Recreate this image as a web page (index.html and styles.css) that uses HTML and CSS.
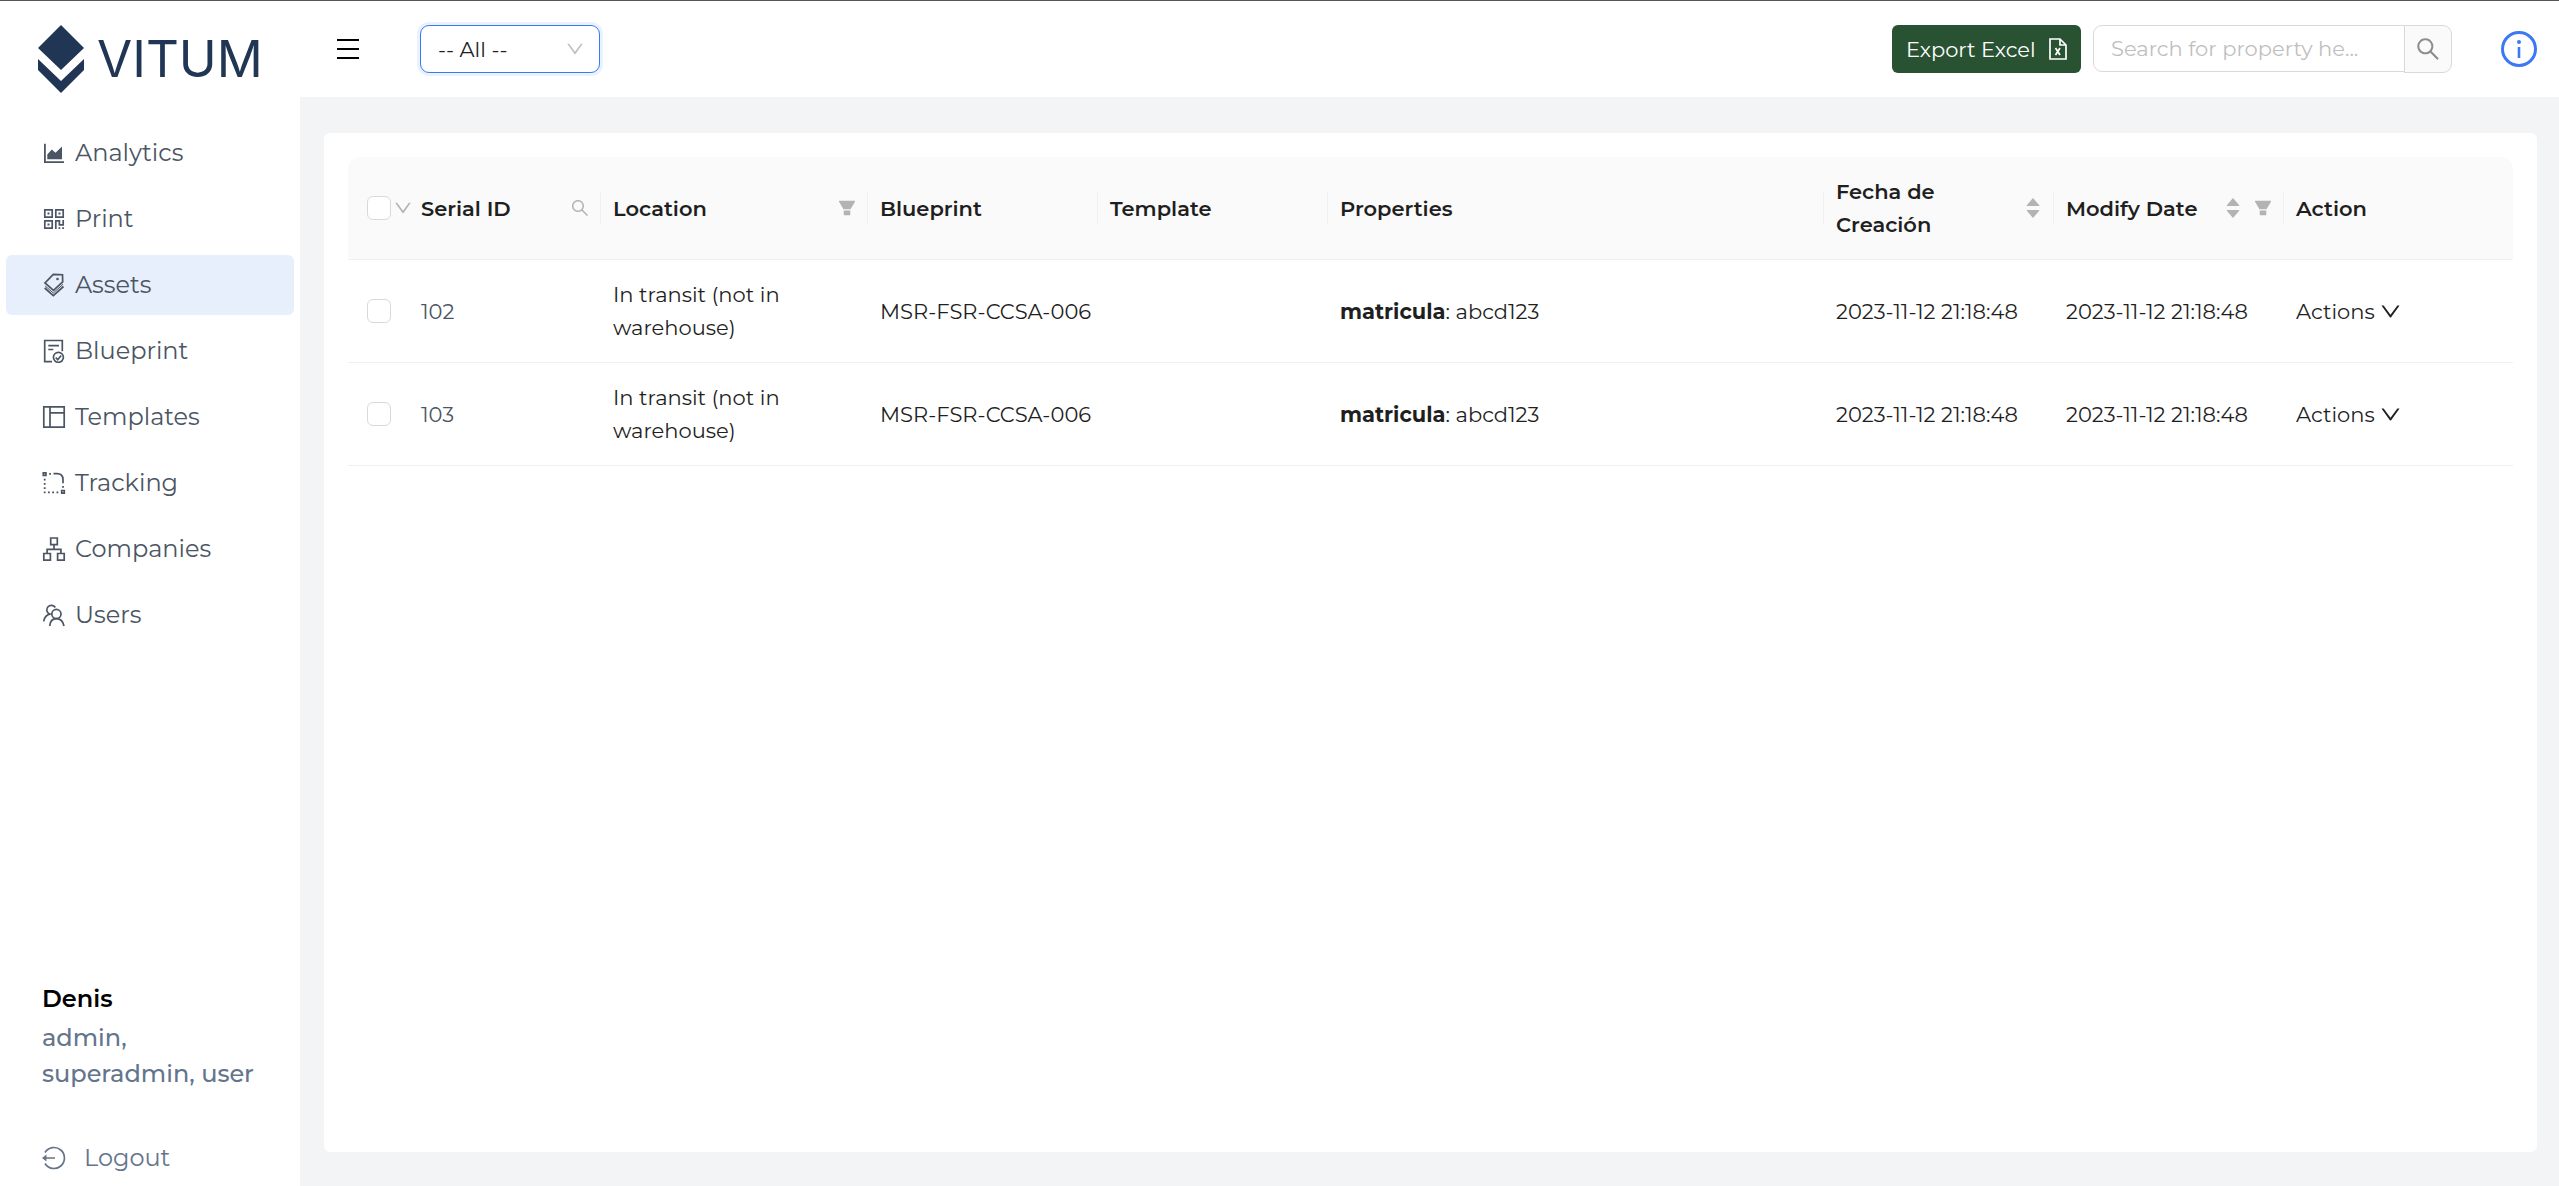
FILE: index.html
```html
<!DOCTYPE html>
<html lang="en">
<head>
<meta charset="utf-8">
<meta name="viewport" content="width=device-width, initial-scale=1">
<title>Vitum - Assets</title>
<link rel="stylesheet" href="styles.css">
</head>
<body>
<svg class="sprite" aria-hidden="true">
  <symbol id="i-down" viewBox="64 64 896 896"><path d="M884 256h-75c-5.1 0-9.9 2.5-12.9 6.6L512 654.2 227.9 262.6c-3-4.1-7.8-6.6-12.9-6.6h-75c-6.5 0-10.3 7.4-6.5 12.7l352.6 486.1c12.8 17.6 39 17.6 51.7 0l352.6-486.1c3.9-5.3.1-12.7-6.4-12.7z"/></symbol>
  <symbol id="i-search" viewBox="64 64 896 896"><path d="M909.6 854.5L649.9 594.8C690.2 542.7 712 479 712 412c0-80.2-31.3-155.4-87.9-212.1-56.6-56.7-132-87.9-212.1-87.9s-155.5 31.3-212.1 87.9C143.2 256.5 112 331.8 112 412c0 80.1 31.3 155.5 87.9 212.1C256.5 680.8 331.8 712 412 712c67 0 130.6-21.8 182.7-62l259.7 259.6a8.2 8.2 0 0011.6 0l43.6-43.5a8.2 8.2 0 000-11.6zM570.4 570.4C528 612.7 471.8 636 412 636s-116-23.3-158.4-65.6C211.3 528 188 471.8 188 412s23.3-116.1 65.6-158.4C296 211.3 352.2 188 412 188s116.1 23.2 158.4 65.6S636 352.2 636 412s-23.3 116.1-65.6 158.4z"/></symbol>
  <symbol id="i-filter" viewBox="64 64 896 896"><path d="M349 838c0 17.7 14.2 32 31.8 32h262.4c17.6 0 31.8-14.3 31.8-32V642H349v196zm531.1-684H143.9c-24.5 0-39.8 26.7-27.5 48l221.3 376h348.8l221.3-376c12.1-21.3-3.2-48-27.7-48z"/></symbol>
  <symbol id="i-sort" viewBox="0 0 14 20"><path d="M7 0l6 7q1 1-.5 1h-11Q0 8 1 7zM7 20l6-7q1-1-.5-1h-11Q0 12 1 13z"/></symbol>
</svg>
<div class="layout">
  <aside class="sidebar">
    <a class="logo" href="#">
      <svg width="46" height="68" viewBox="0 0 46 68" aria-hidden="true"><path d="M23 0l23 23-23 22L0 23zM0 34l23 22 23-22v11L23 68 0 45z"/></svg>
      <span>VITUM</span>
    </a>
    <nav class="menu">
      <a href="#"><svg viewBox="0 0 24 24"><path d="M2 2.700h1.800v17.500H22V22H2zM5.300 18.300v-4.800l4.500-5 3.700 3.300L20 5.500v12.800z"/></svg>Analytics</a>
      <a href="#"><svg viewBox="0 0 24 24"><path class="line" d="M2.800 2.800h7.400v7.400H2.800zM13.800 2.800h7.400v7.400h-7.400zM2.800 13.800h7.400v7.400H2.800zM13.800 22v-8.200h3.600v4h3.800V13"/><path d="M5.500 5.500h2v2h-2zM16.500 5.500h2v2h-2zM5.500 16.500h2v2h-2zM16.500 20.200h1.800V22h-1.800zM20.200 20.200H22V22h-1.800z"/></svg>Print</a>
      <a href="#" class="active" aria-current="page"><svg viewBox="0 0 24 24"><path class="line" d="M11.300 1.300l9.200.4.2 7.300-9.200 8.300L3 10zM2.700 15l8.600 7.700L21.500 13.500"/><path class="line thin" d="M3.200 13l8.100 7 9.700-8.700"/><circle cx="15.500" cy="6" r="1.300"/></svg>Assets</a>
      <a href="#"><svg viewBox="0 0 24 24"><path class="line" d="M10 22.700H2.700V1.500h17.600v10.700M6.300 6.600H17M6.300 10.500h5M13.700 18.500l2 2.200 3.500-4.200"/><circle class="line" cx="16.400" cy="18.300" r="5"/></svg>Blueprint</a>
      <a href="#"><svg viewBox="0 0 24 24"><path class="line" d="M1.800 1.800h20.400v20.400H1.800zM8 1.800v20.400M8 7.800h14.200"/></svg>Templates</a>
      <a href="#"><svg viewBox="0 0 24 24"><path class="line" d="M1.300 1.800h2.600v2.600H1.300zM19.700 19.500h2.600v2.600h-2.600zM11.500 2.700H15q6 0 6 6v3.500"/><path d="M7.200 2H9v1.800H7.200zM1.800 7.700h1.800v1.800H1.800zM1.800 12h1.800v1.800H1.800zM1.800 16.200h1.800V18H1.800zM1.800 20.500h1.800v1.800H1.800zM6 20.500h1.800v1.800H6zM10.200 20.500H12v1.800h-1.800zM14.500 20.500h1.800v1.800h-1.800zM20.100 15h1.800v1.800h-1.800z"/></svg>Tracking</a>
      <a href="#"><svg viewBox="0 0 24 24"><path class="line" d="M8.700 1h6.600v6.600H8.700zM1.800 16.500h6.600v6.600H1.800zM15.600 16.500h6.600v6.600h-6.600zM12 7.600v4.700M5.100 16.500v-4.200h13.800v4.200"/></svg>Companies</a>
      <a href="#"><svg viewBox="0 0 24 24"><path class="line" d="M7.700 23q.6-7.300 6.700-7.300T22 23M13.300 4.500a4.600 4.600 0 1 0-6 6.500M8.800 10.800Q2.500 12 1.700 18.300"/><circle class="line" cx="14.400" cy="11" r="4.600"/></svg>Users</a>
    </nav>
    <div class="account">
      <strong>Denis</strong>
      <p>admin,<br>superadmin, user</p>
    </div>
    <a class="logout" href="#"><svg viewBox="0 0 24 24"><path class="line" d="M3 6.500a10.500 10.500 0 1 1 0 11M4 12h9"/><path d="M0 12l4.500-3.500v7z"/></svg>Logout</a>
  </aside>
  <div class="page">
    <header class="topbar">
      <button class="burger" type="button" aria-label="Toggle menu"><svg width="22" height="20" viewBox="0 0 22 20"><path d="M0 0h22v2H0zM0 9h22v2H0zM0 18h22v2H0z"/></svg></button>
      <div class="picker">
        <select aria-label="Company"><option>-- All --</option></select>
        <svg class="caret"><use href="#i-down"/></svg>
      </div>
      <button class="export" type="button">Export Excel<svg width="18" height="22" viewBox="0 0 18 22"><path class="line" d="M1 1h10l6 6v14H1zM11 1v6h6M6.500 10l4.500 7M11 10l-4.500 7"/></svg></button>
      <form class="search">
        <input type="text" aria-label="Search" placeholder="Search for property he...">
        <button type="button" aria-label="Run search"><svg><use href="#i-search"/></svg></button>
      </form>
      <button class="info" type="button" aria-label="Information"><svg width="36" height="36" viewBox="0 0 36 36"><circle class="line" cx="18" cy="18" r="16.500"/><circle cx="18" cy="11" r="2"/><path d="M16.700 16h2.600v11h-2.600z"/></svg></button>
    </header>
    <main class="card">
      <table>
        <colgroup><col class="c-check"><col class="c-serial"><col class="c-location"><col class="c-std"><col class="c-std"><col><col class="c-std"><col class="c-std"><col class="c-action"></colgroup>
        <thead>
          <tr>
            <th><div class="pick"><input type="checkbox" aria-label="Select all"><svg class="i18"><use href="#i-down"/></svg></div></th>
            <th class="sep"><div class="head">Serial ID<svg class="i18"><use href="#i-search"/></svg></div></th>
            <th class="sep"><div class="head">Location<svg class="i18"><use href="#i-filter"/></svg></div></th>
            <th class="sep">Blueprint</th>
            <th class="sep">Template</th>
            <th class="sep">Properties</th>
            <th class="sep"><div class="head sorted">Fecha de Creación<svg class="sort"><use href="#i-sort"/></svg></div></th>
            <th class="sep"><div class="head">Modify Date<span class="tools"><svg class="sort"><use href="#i-sort"/></svg><svg class="i18"><use href="#i-filter"/></svg></span></div></th>
            <th>Action</th>
          </tr>
        </thead>
        <tbody>
          <tr>
            <td><div class="pick"><input type="checkbox" aria-label="Select 102"></div></td>
            <td><a href="#">102</a></td>
            <td>In transit (not in warehouse)</td>
            <td class="code">MSR-FSR-CCSA-006</td>
            <td></td>
            <td><b>matricula</b>: abcd123</td>
            <td>2023-11-12 21:18:48</td>
            <td>2023-11-12 21:18:48</td>
            <td><button class="actions" type="button">Actions<svg><use href="#i-down"/></svg></button></td>
          </tr>
          <tr>
            <td><div class="pick"><input type="checkbox" aria-label="Select 103"></div></td>
            <td><a href="#">103</a></td>
            <td>In transit (not in warehouse)</td>
            <td class="code">MSR-FSR-CCSA-006</td>
            <td></td>
            <td><b>matricula</b>: abcd123</td>
            <td>2023-11-12 21:18:48</td>
            <td>2023-11-12 21:18:48</td>
            <td><button class="actions" type="button">Actions<svg><use href="#i-down"/></svg></button></td>
          </tr>
        </tbody>
      </table>
    </main>
  </div>
</div>
</body>
</html>
```
FILE: styles.css
```css
* { box-sizing: border-box; }
body {
  margin: 0;
  background: #f3f4f6;
  color: #1f1f1f;
  font: 400 21px/33px Montserrat, Inter, sans-serif;
}
button, input, select { font: inherit; color: inherit; margin: 0; }
button { cursor: pointer; border: 0; background: none; padding: 0; }
a { color: inherit; text-decoration: none; }
svg { fill: currentColor; flex: none; display: block; }
.sprite { display: none; }
.line { fill: none; stroke: currentColor; stroke-width: 1.7; }
.thin { stroke-width: 1; }

.layout { display: flex; min-height: 100vh; border-top: 1px solid #555; }
.sidebar {
  flex: 0 0 300px;
  display: flex;
  flex-direction: column;
  background: #fff;
  padding: 24px 6px 10px;
  font-size: 24px;
  line-height: 36px;
}
.logo {
  display: flex;
  align-items: center;
  gap: 13px;
  padding-left: 32px;
  height: 68px;
  color: #213655;
  font: 400 51px/66px Inter, sans-serif;
}
.menu { display: flex; flex-direction: column; gap: 6px; margin-top: 30px; color: #4b5563; }
.menu a { display: flex; align-items: center; gap: 9px; height: 60px; padding-left: 36px; border-radius: 6px; }
.menu a.active { background: #e7effd; }
.menu svg { width: 24px; height: 24px; }
.account { margin-top: auto; padding-left: 36px; color: #64748b; font-weight: 500; }
.account strong { color: #000; font-weight: 600; line-height: 42px; display: block; }
.account p { margin: 0; }
.logout { display: flex; align-items: center; gap: 18px; padding-left: 36px; margin-top: 48px; color: #64748b; }
.logout svg { width: 24px; height: 24px; }

.page { flex: 1; min-width: 0; display: flex; flex-direction: column; }
.topbar { display: flex; align-items: center; height: 96px; padding: 0 22px 0 37px; background: #fff; }
.burger { color: #000; margin-right: 61px; }
.picker { display: grid; align-items: center; width: 180px; }
.picker select {
  grid-area: 1 / 1;
  height: 48px;
  padding: 0 17px;
  appearance: none;
  background: #fff;
  border: 1px solid #3b78f5;
  border-radius: 9px;
  box-shadow: 0 0 0 3px #e9f2ff;
  outline: 0;
}
.caret { grid-area: 1 / 1; justify-self: end; margin-right: 16px; width: 18px; height: 18px; color: #bfbfbf; pointer-events: none; }
.export {
  display: flex;
  align-items: center;
  justify-content: space-between;
  width: 189px;
  height: 48px;
  margin-left: auto;
  padding: 0 14px;
  border-radius: 6px;
  background: #295233;
  color: #fff;
}
.search { display: flex; margin: 0 49px 0 12px; }
.search input {
  width: 312px;
  height: 47px;
  padding: 0 17px;
  border: 1px solid #d9d9d9;
  border-radius: 9px 0 0 9px;
  background: #fff;
  outline: 0;
}
.search input::placeholder { color: #bfbfbf; opacity: 1; }
.search button { display: grid; place-items: center; width: 48px; height: 48px; margin-left: -1px; border: 1px solid #d9d9d9; border-radius: 0 9px 9px 0; background: #fafafa; color: #8c8c8c; }
.search svg { width: 24px; height: 24px; }
.info { color: #3b78f5; }
.info .line { stroke-width: 3; }

.card { flex: 1; margin: 36px 22px 34px 24px; padding: 24px; background: #fff; border-radius: 6px; }
table { width: 100%; table-layout: fixed; border-collapse: separate; border-spacing: 0; }
.c-check { width: 61px; }
.c-serial { width: 192px; }
.c-location { width: 267px; }
.c-std { width: 230px; }
.c-action { width: 229px; }
th, td { height: 103px; padding: 0 12px; text-align: left; border-bottom: 1px solid #f0f0f0; }
th { background: linear-gradient(#f0f0f0, #f0f0f0) right center / 0 34px no-repeat #fafafa; font-weight: 600; }
th.sep { background-size: 1px 34px; }
th:first-child { border-top-left-radius: 12px; }
th:last-child { border-top-right-radius: 12px; }
th svg { color: #b3b3b3; }
td a { color: #4b5563; }
b { font-weight: 700; }
.code { white-space: nowrap; }
.head { display: flex; align-items: center; justify-content: space-between; }
.sorted { padding-right: 2px; gap: 40px; }
.tools { display: flex; gap: 14px; align-items: center; }
.i18 { width: 18px; height: 18px; }
.sort { width: 14px; height: 20px; }
.pick { display: flex; align-items: center; gap: 3px; width: 54px; }
th:first-child, td:first-child { padding: 0 0 0 19px; }
.pick input { appearance: none; flex: none; width: 24px; height: 24px; border: 1px solid #d9d9d9; border-radius: 6px; background: #fff; }
.actions { display: flex; align-items: center; gap: 5px; }
.actions svg { width: 21px; height: 21px; }
```
